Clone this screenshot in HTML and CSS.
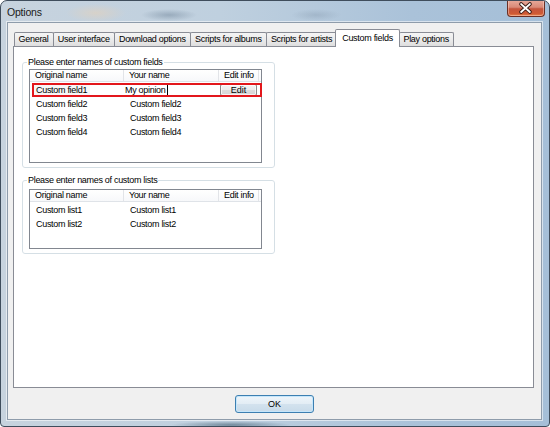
FILE: index.html
```html
<!DOCTYPE html>
<html>
<head>
<meta charset="utf-8">
<link rel="stylesheet" href="styles.css">
</head>
<body>
<div class="window">
  <div class="titlebar">
    <span class="title">Options</span>
    <div class="close">
      <svg width="38" height="17" viewBox="0 0 38 17">
        <path d="M14.5 4 L23.5 12 M23.5 4 L14.5 12" stroke="#3b1c16" stroke-width="4" stroke-linecap="round"/>
        <path d="M14.5 4 L23.5 12 M23.5 4 L14.5 12" stroke="#ffffff" stroke-width="2" stroke-linecap="round"/>
      </svg>
    </div>
  </div>
  <div class="client">
    <div class="tabs">
      <div class="tab">General</div>
      <div class="tab">User interface</div>
      <div class="tab">Download options</div>
      <div class="tab">Scripts for albums</div>
      <div class="tab">Scripts for artists</div>
      <div class="tab active">Custom fields</div>
      <div class="tab">Play options</div>
    </div>
    <div class="panel">
      <fieldset class="group g1">
        <legend>Please enter names of custom fields</legend>
        <div class="list l1">
          <div class="head">
            <div class="hc c1">Original name</div>
            <div class="hc c2">Your name</div>
            <div class="hc c3">Edit info</div>
          </div>
          <div class="rows">
            <div class="row editing">
              <div class="c1"><span class="cellbox">Custom field1</span></div>
              <div class="c2"><span class="input">My opinion<span class="caret"></span></span></div>
              <div class="c3"><span class="editbtn">Edit</span></div>
            </div>
            <div class="row"><div class="c1 t">Custom field2</div><div class="c2 t">Custom field2</div></div>
            <div class="row"><div class="c1 t">Custom field3</div><div class="c2 t">Custom field3</div></div>
            <div class="row"><div class="c1 t">Custom field4</div><div class="c2 t">Custom field4</div></div>
          </div>
        </div>
      </fieldset>
      <fieldset class="group g2">
        <legend>Please enter names of custom lists</legend>
        <div class="list l2">
          <div class="head">
            <div class="hc c1">Original name</div>
            <div class="hc c2">Your name</div>
            <div class="hc c3">Edit info</div>
          </div>
          <div class="rows">
            <div class="row"><div class="c1 t">Custom list1</div><div class="c2 t">Custom list1</div></div>
            <div class="row"><div class="c1 t">Custom list2</div><div class="c2 t">Custom list2</div></div>
          </div>
        </div>
      </fieldset>
    </div>
    <div class="footer">
      <button class="ok">OK</button>
    </div>
  </div>
</div>
</body>
</html>
```

FILE: styles.css
```css
html, body {
  margin: 0;
  padding: 0;
  width: 550px;
  height: 427px;
  overflow: hidden;
  background: #ffffff;
}
body {
  font-family: "Liberation Sans", Arial, sans-serif;
  font-size: 9px;
  letter-spacing: -0.3px;
  color: #000;
}
.window {
  box-sizing: border-box;
  width: 550px;
  height: 427px;
  border: 1px solid #3f4d5c;
  border-radius: 7px 7px 4px 4px;
  display: flex;
  flex-direction: column;
  background:
    radial-gradient(ellipse 30px 9px at 95px 12px, rgba(220, 210, 196, 0.8), rgba(220, 210, 196, 0)),
    radial-gradient(ellipse 28px 6px at 168px 14px, rgba(120, 140, 160, 0.55), rgba(120, 140, 160, 0)),
    radial-gradient(ellipse 25px 6px at 315px 14px, rgba(140, 160, 180, 0.45), rgba(140, 160, 180, 0)),
    radial-gradient(ellipse 60px 4px at 230px 424px, rgba(40, 70, 90, 0.5), rgba(40, 70, 90, 0)),
    linear-gradient(to right, #c7d3de 0%, #bfd0df 40%, #aac2d9 75%, #a5bfd8 100%);
  overflow: hidden;
}
.titlebar {
  height: 21px;
  flex: none;
  display: flex;
  align-items: flex-start;
}
.title {
  font-size: 10.5px;
  letter-spacing: -0.2px;
  color: #1a1a1a;
  margin: 5px 0 0 6px;
  line-height: 12px;
}
.close {
  margin-left: auto;
  margin-right: 4px;
  margin-top: -1px;
  width: 38px;
  height: 17px;
  box-sizing: border-box;
  border: 1px solid #6a2f25;
  border-top: none;
  border-radius: 0 0 4px 4px;
  background: linear-gradient(to bottom, #e8ab9c 0%, #d98a78 45%, #c4553d 55%, #cf5a34 85%, #e9854e 100%);
  box-shadow: inset 0 0 0 1px rgba(255, 220, 210, 0.45);
  display: flex;
}
.close svg {
  display: block;
  margin-left: -1px;
}
.client {
  flex: none;
  box-sizing: border-box;
  width: 535px;
  height: 398px;
  margin-left: 6px;
  background: #f0f0f0;
  border: 1px solid #8e9cab;
  box-shadow: 0 0 0 1px rgba(255, 255, 255, 0.55);
  display: flex;
  flex-direction: column;
}
.tabs {
  display: flex;
  align-items: flex-end;
  height: 17px;
  margin-top: 6px;
  padding-left: 6px;
  position: relative;
  z-index: 2;
}
.tab {
  box-sizing: border-box;
  height: 14px;
  line-height: 13px;
  padding: 0 4px 0 3.6px;
  border: 1px solid #898c95;
  border-bottom: none;
  border-radius: 2px 2px 0 0;
  background: linear-gradient(to bottom, #f5f5f5 0%, #ebebeb 50%, #dedede 100%);
  white-space: nowrap;
}
.tab + .tab {
  margin-left: -0.3px;
}
.tab.active {
  height: 18px;
  line-height: 16px;
  margin: 0 -1px -1px -2px;
  padding: 0 6px;
  background: #ffffff;
  position: relative;
  z-index: 3;
}
.tab.active + .tab {
  margin-left: 0;
}
.panel {
  box-sizing: border-box;
  width: 521px;
  height: 342px;
  margin-left: 5px;
  background: #ffffff;
  border: 1px solid #898c95;
  padding: 10px 0 0 8px;
  display: flex;
  flex-direction: column;
  position: relative;
  z-index: 1;
}
.group {
  box-sizing: border-box;
  width: 253px;
  margin: 0;
  border: 1px solid #d5dfe5;
  border-radius: 3px;
  padding: 1px 12px 4px 6px;
  min-width: 0;
}
.group legend {
  padding: 0 1px;
  margin-left: -2px;
  line-height: 11px;
  color: #000;
}
.g2 {
  margin-top: 7px;
  padding-top: 3px;
}
.list {
  box-sizing: border-box;
  width: 233px;
  border: 1px solid #828790;
  background: #ffffff;
  position: relative;
}
.l1 { height: 94px; }
.l2 { height: 60px; }
.head {
  display: flex;
  height: 12px;
  box-sizing: border-box;
  border-bottom: 1px solid #dfe3e8;
  background: linear-gradient(to bottom, #ffffff, #f7f8fa);
}
.hc {
  box-sizing: border-box;
  line-height: 11px;
  padding-left: 5px;
  border-right: 1px solid #e2e4e8;
  white-space: nowrap;
}
.c1 { width: 94px; flex: none; box-sizing: border-box; }
.c2 { width: 95px; flex: none; box-sizing: border-box; }
.c3 { width: 40px; flex: none; box-sizing: border-box; }
.rows {
  padding-top: 1px;
}
.row {
  display: flex;
  height: 14px;
  line-height: 14px;
  white-space: nowrap;
}
.row .t {
  padding-left: 6px;
}
.row.editing {
  position: relative;
}
.row.editing::after {
  content: "";
  position: absolute;
  left: 2px;
  top: 0;
  width: 230px;
  height: 14px;
  box-sizing: border-box;
  border: 2px solid #e3171c;
  pointer-events: none;
}
.cellbox {
  display: block;
  margin-left: 3px;
  width: 57px;
  height: 14px;
  box-sizing: border-box;
  padding-left: 3px;
  background: #f7f7f7;
  line-height: 14px;
}
.input {
  display: flex;
  align-items: center;
  height: 14px;
  padding-left: 1px;
  background: #ffffff;
}
.caret {
  display: inline-block;
  width: 1px;
  height: 10px;
  background: #000;
  margin-left: 1px;
}
.editbtn {
  display: block;
  margin: 1px 0 0 1px;
  width: 37px;
  height: 12px;
  box-sizing: border-box;
  border: 1px solid #8a8a8a;
  border-radius: 2px;
  background: linear-gradient(to bottom, #f4f4f4 0%, #ececec 50%, #dcdcdc 51%, #d6d6d6 100%);
  box-shadow: inset 0 0 0 1px rgba(255, 255, 255, 0.7);
  text-align: center;
  line-height: 10px;
  letter-spacing: 0;
}
.footer {
  display: flex;
  justify-content: center;
  padding-top: 7px;
}
.ok {
  box-sizing: border-box;
  width: 79px;
  height: 18px;
  margin: 0;
  padding: 0;
  font-family: "Liberation Sans", Arial, sans-serif;
  font-size: 9px;
  color: #000;
  border: 1px solid #3c7fb1;
  border-radius: 3px;
  background: linear-gradient(to bottom, #eef5fa 0%, #e3edf5 48%, #d3e2ee 52%, #c8dbea 100%);
  box-shadow: inset 0 0 0 1px #c5e6fb;
}
```
